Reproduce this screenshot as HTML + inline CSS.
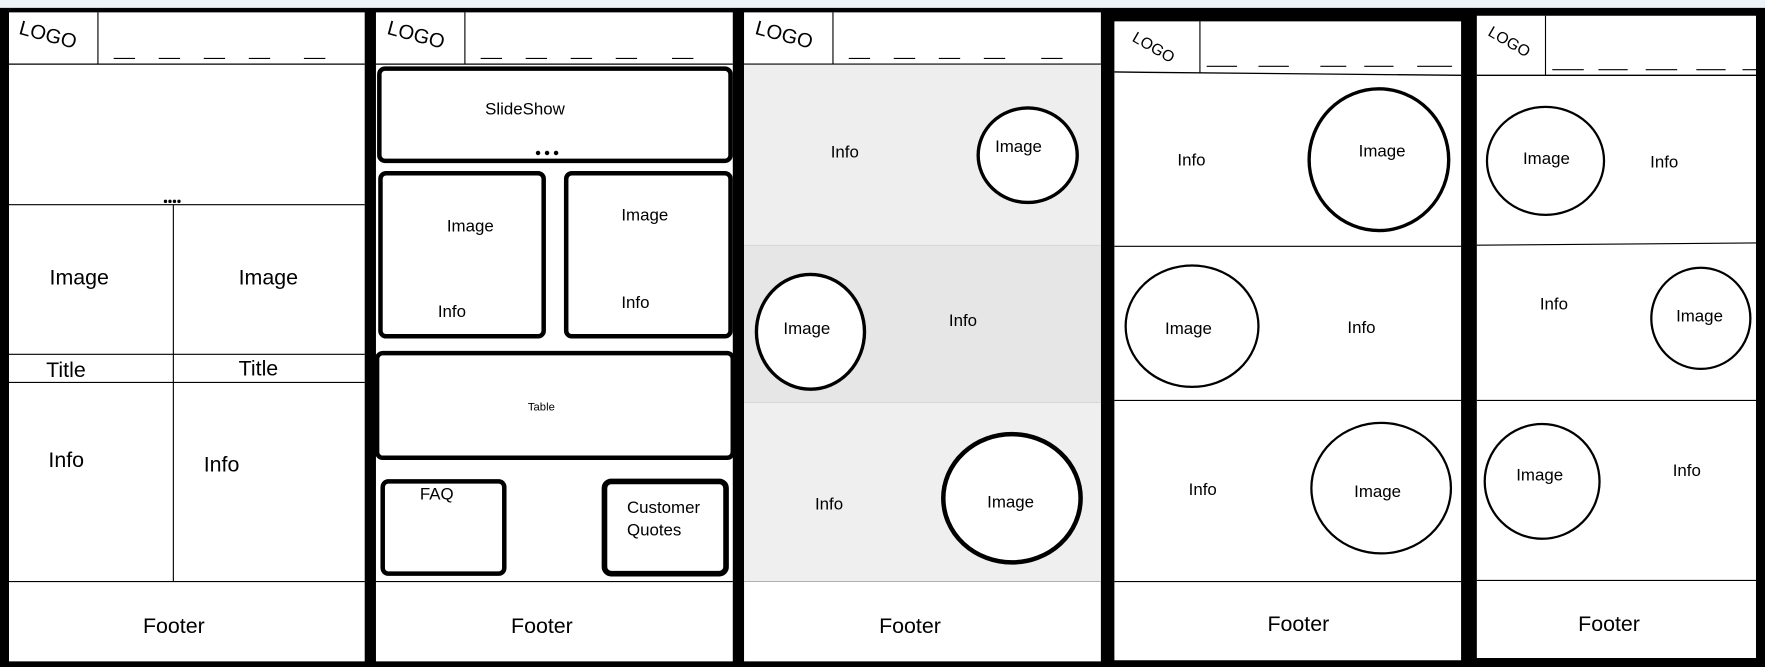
<!DOCTYPE html>
<html><head><meta charset="utf-8"><style>html,body{margin:0;padding:0;background:#000;overflow:hidden}svg{display:block}text{font-family:"Liberation Sans",sans-serif;fill:#000}</style></head>
<body>
<svg width="1765" height="667" viewBox="0 0 1568 593" preserveAspectRatio="none" xmlns="http://www.w3.org/2000/svg">
<rect x="0" y="0" width="1568" height="593" fill="#000"/>
<rect x="0" y="0" width="1568" height="7" fill="#eef2f9"/>
<g stroke="#000" fill="none">
<rect x="8" y="11" width="316" height="577" fill="#fff" stroke="none"/>
<line x1="8" y1="57" x2="324" y2="57" stroke-width="1.2"/>
<line x1="87" y1="11" x2="87" y2="57" stroke-width="1"/>
<line x1="8" y1="182" x2="324" y2="182" stroke-width="1"/>
<line x1="154" y1="182" x2="154" y2="517" stroke-width="1"/>
<line x1="8" y1="315" x2="324" y2="315" stroke-width="1"/>
<line x1="8" y1="340" x2="324" y2="340" stroke-width="1"/>
<line x1="8" y1="517" x2="324" y2="517" stroke-width="1"/>
<rect x="334" y="11" width="317" height="577" fill="#fff" stroke="none"/>
<line x1="334" y1="57" x2="651" y2="57" stroke-width="1.2"/>
<line x1="413" y1="11" x2="413" y2="57" stroke-width="1"/>
<rect x="337" y="61" width="312" height="82" rx="5" stroke-width="4"/>
<rect x="338" y="154" width="145" height="145" rx="5" stroke-width="4"/>
<rect x="503" y="154" width="146" height="145" rx="5" stroke-width="4"/>
<rect x="335" y="314" width="316" height="93" rx="5" stroke-width="4"/>
<rect x="340" y="428" width="108" height="82" rx="5" stroke-width="4"/>
<rect x="537" y="428" width="108" height="82" rx="6" stroke-width="5"/>
<line x1="334" y1="517" x2="651" y2="517" stroke-width="1"/>
<rect x="661" y="11" width="317" height="577" fill="#fff" stroke="none"/>
<rect x="661" y="57" width="317" height="161" fill="#efeeef" stroke="none"/>
<rect x="661" y="218" width="317" height="140" fill="#e6e6e6" stroke="none"/>
<rect x="661" y="358" width="317" height="159" fill="#efefef" stroke="none"/>
<line x1="661" y1="57" x2="978" y2="57" stroke-width="1"/>
<line x1="740" y1="11" x2="740" y2="57" stroke-width="1"/>
<line x1="661" y1="218" x2="978" y2="218" stroke-width="0.5" stroke="#ccc"/>
<line x1="661" y1="358" x2="978" y2="358" stroke-width="0.5" stroke="#ccc"/>
<line x1="661" y1="517" x2="978" y2="517" stroke-width="0.6" stroke="#999"/>
<ellipse cx="913" cy="138" rx="44" ry="42" fill="#fff" stroke-width="3"/>
<ellipse cx="720" cy="295" rx="48" ry="51" fill="#fff" stroke-width="3"/>
<ellipse cx="899" cy="443" rx="61" ry="57" fill="#fff" stroke-width="4"/>
<rect x="990" y="19" width="308" height="568" fill="#fff" stroke="none"/>
<line x1="990" y1="64" x2="1298" y2="67" stroke-width="1.2"/>
<line x1="1066" y1="19" x2="1066" y2="65" stroke-width="1"/>
<line x1="990" y1="219" x2="1298" y2="219" stroke-width="1"/>
<line x1="990" y1="356" x2="1298" y2="356" stroke-width="1"/>
<line x1="990" y1="517" x2="1298" y2="517" stroke-width="1"/>
<ellipse cx="1225" cy="142" rx="62" ry="63" stroke-width="3"/>
<ellipse cx="1059" cy="290" rx="59" ry="54" stroke-width="2"/>
<ellipse cx="1227" cy="434" rx="62" ry="58" stroke-width="2"/>
<rect x="1312" y="14" width="248" height="571" fill="#fff" stroke="none"/>
<line x1="1312" y1="67" x2="1560" y2="67" stroke-width="1.2"/>
<line x1="1373" y1="14" x2="1373" y2="67" stroke-width="1"/>
<line x1="1312" y1="218" x2="1560" y2="216" stroke-width="1"/>
<line x1="1312" y1="356" x2="1560" y2="356" stroke-width="1"/>
<line x1="1312" y1="516" x2="1560" y2="516" stroke-width="1"/>
<ellipse cx="1373" cy="143" rx="52" ry="48" stroke-width="2"/>
<ellipse cx="1511" cy="283" rx="44" ry="45" stroke-width="2"/>
<ellipse cx="1370" cy="428" rx="51" ry="51" stroke-width="2"/>
<path d="M101 52h19M141 52h19M181 52h19M221 52h19M270 52h19" stroke-width="1"/>
<path d="M427 52h19M467 52h19M507 52h19M547 52h19M597 52h19" stroke-width="1"/>
<path d="M754 52h19M794 52h19M834 52h19M874 52h19M925 52h19" stroke-width="1"/>
<path d="M1072 59h27M1118 59h27M1173 59h23M1212 59h26M1259 59h31" stroke-width="1"/>
<path d="M1379 62h28M1420 62h26M1462 62h28M1507 62h26M1548 62h12" stroke-width="1"/>
</g>
<g fill="#000">
<circle cx="147" cy="179" r="1.5"/><circle cx="151" cy="179" r="1.5"/><circle cx="155" cy="179" r="1.5"/><circle cx="159" cy="179" r="1.5"/>
<circle cx="478" cy="136" r="2"/><circle cx="486" cy="136" r="2"/><circle cx="494" cy="136" r="2"/>
</g>
<g font-size="18">
<text transform="translate(16,30) rotate(15)">LOGO</text>
<text transform="translate(343,30) rotate(15)">LOGO</text>
<text transform="translate(670,30) rotate(15)">LOGO</text>
<text transform="translate(1005,36) rotate(30)" font-size="14">LOGO</text>
<text transform="translate(1321,31) rotate(30)" font-size="14">LOGO</text>
</g>
<g font-size="19">
<text x="44" y="253">Image</text><text x="212" y="253">Image</text>
<text x="41" y="335">Title</text><text x="212" y="334">Title</text>
<text x="43" y="415">Info</text><text x="181" y="419">Info</text>
<text x="127" y="563">Footer</text><text x="454" y="563">Footer</text><text x="781" y="563">Footer</text>
<text x="1126" y="561">Footer</text><text x="1402" y="561">Footer</text>
</g>
<g font-size="15">
<text x="431" y="102">SlideShow</text>
<text x="397" y="206">Image</text><text x="389" y="282">Info</text>
<text x="552" y="196">Image</text><text x="552" y="274">Info</text>
<text x="373" y="444">FAQ</text>
<text x="557" y="456">Customer</text><text x="557" y="476">Quotes</text>
<text x="738" y="140">Info</text><text x="884" y="135">Image</text>
<text x="696" y="297">Image</text><text x="843" y="290">Info</text>
<text x="724" y="453">Info</text><text x="877" y="451">Image</text>
<text x="1046" y="147">Info</text><text x="1207" y="139">Image</text>
<text x="1035" y="297">Image</text><text x="1197" y="296">Info</text>
<text x="1056" y="440">Info</text><text x="1203" y="442">Image</text>
<text x="1353" y="146">Image</text><text x="1466" y="149">Info</text>
<text x="1368" y="275">Info</text><text x="1489" y="286">Image</text>
<text x="1347" y="427">Image</text><text x="1486" y="423">Info</text>
</g>
<text x="469" y="365" font-size="10">Table</text>
</svg>
</body></html>
